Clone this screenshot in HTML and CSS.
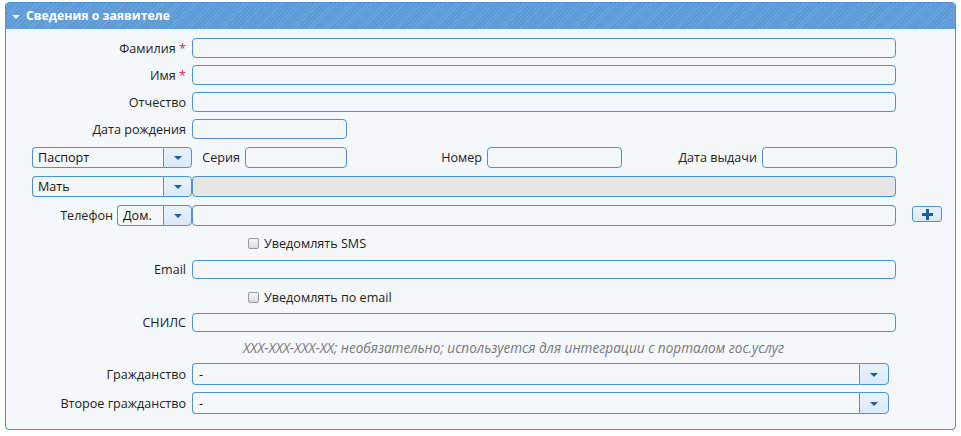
FILE: index.html
```html
<!DOCTYPE html>
<html lang="ru">
<head>
<meta charset="utf-8">
<title>Сведения о заявителе</title>
<link rel="stylesheet" href="styles.css">
</head>
<body>
<div class="panel">
  <div class="panel-head"><span class="tri"></span><span class="title">Сведения о заявителе</span></div>
  <div class="panel-body">
    <div class="row r-gap7">
      <label class="lbl">Фамилия <span class="req">*</span></label>
      <input class="inp wide" type="text">
    </div>
    <div class="row r-gap7">
      <label class="lbl">Имя <span class="req">*</span></label>
      <input class="inp wide" type="text">
    </div>
    <div class="row r-gap7">
      <label class="lbl">Отчество</label>
      <input class="inp wide" type="text">
    </div>
    <div class="row r-gap8">
      <label class="lbl">Дата рождения</label>
      <input class="inp date" type="text">
    </div>
    <div class="row r-gap8 tall indent">
      <div class="sel sel-doc"><span class="sel-text">Паспорт</span><span class="sel-btn"><span class="arr"></span></span></div>
      <label class="lbl-s w-ser">Серия</label>
      <input class="inp ser" type="text">
      <label class="lbl-s w-num">Номер</label>
      <input class="inp num" type="text">
      <label class="lbl-s w-num">Дата выдачи</label>
      <input class="inp num" type="text">
    </div>
    <div class="row r-gap8 tall indent">
      <div class="sel sel-doc"><span class="sel-text">Мать</span><span class="sel-btn"><span class="arr"></span></span></div>
      <input class="inp wide gray" type="text" disabled>
    </div>
    <div class="row r-gap7 tall">
      <label class="lbl-phone">Телефон</label>
      <div class="sel sel-phone"><span class="sel-text">Дом.</span><span class="sel-btn"><span class="arr"></span></span></div>
      <input class="inp wide" type="text">
      <button class="plus" type="button"><svg width="11" height="11" viewBox="0 0 11 11"><path d="M4 0h3v4h4v3H7v4H4V7H0V4h4z" fill="#1c5da6"/></svg></button>
    </div>
    <div class="row r-gap7 cbrow">
      <span class="cb"></span><span class="cb-text">Уведомлять SMS</span>
    </div>
    <div class="row r-gap8 short">
      <label class="lbl">Email</label>
      <input class="inp wide" type="text">
    </div>
    <div class="row r-gap6 cbrow">
      <span class="cb"></span><span class="cb-text">Уведомлять по email</span>
    </div>
    <div class="row r-gap6 short">
      <label class="lbl">СНИЛС</label>
      <input class="inp wide" type="text">
    </div>
    <div class="row r-gap7 hint">XXX-XXX-XXX-XX; необязательно; используется для интеграции с порталом гос.услуг</div>
    <div class="row r-gap7 big">
      <label class="lbl">Гражданство</label>
      <div class="sel sel-cit"><span class="sel-text">-</span><span class="sel-btn"><span class="arr"></span></span></div>
    </div>
    <div class="row big">
      <label class="lbl">Второе гражданство</label>
      <div class="sel sel-cit"><span class="sel-text">-</span><span class="sel-btn"><span class="arr"></span></span></div>
    </div>
  </div>
</div>
</body>
</html>
```
FILE: styles.css
```css
* { box-sizing: border-box; }
html, body { margin: 0; padding: 0; background: #ffffff; }
body {
  font-family: "Open Sans", "Noto Sans", Arial, sans-serif;
  font-size: 12.6px;
  color: #222;
  padding: 2px 0 0 5px;
}
.panel {
  width: 951px;
  border: 1px solid #4a93d6;
  border-radius: 4px;
  background: #f5f8fa;
  overflow: hidden;
}
.panel-head {
  height: 26px;
  display: flex;
  align-items: center;
  padding-left: 6px;
  background-color: #5c9bd7;
  background-image: repeating-linear-gradient(135deg, rgba(255,255,255,0.10) 0 1px, rgba(255,255,255,0) 1px 3px);
  color: #fff;
  font-weight: bold;
  font-size: 12.3px;
}
.tri {
  width: 0; height: 0;
  border-left: 4px solid transparent;
  border-right: 4px solid transparent;
  border-top: 4px solid #e8f1fa;
  margin-right: 6px;
  margin-top: 1px;
}
.title { line-height: 1; }
.panel-body { padding: 9px 0 15px 0; }
.row { display: flex; align-items: center; height: 20px; }
.row.tall { height: 21px; }
.row.short { height: 19px; }
.row.big { height: 22px; }
.r-gap6 { margin-bottom: 6px; }
.r-gap7 { margin-bottom: 7px; }
.r-gap8 { margin-bottom: 8px; }
.lbl {
  width: 186px;
  padding-right: 6px;
  text-align: right;
  white-space: nowrap;
  flex: none;
}
.req { color: #e0284a; }
.inp {
  height: 100%;
  border: 1px solid #4a93d6;
  border-radius: 4px;
  background: #f5f8fa;
  font: inherit;
  padding: 0 4px;
  margin: 0;
  flex: none;
  outline: none;
}
.inp.wide { width: 704px; }
.inp.date { width: 155px; }
.inp.ser { width: 102px; }
.inp.num { width: 135px; }
.inp.gray { background: #e6e6e6; }
.indent { padding-left: 26px; }
.lbl-s { text-align: right; padding-right: 5px; flex: none; white-space: nowrap; }
.w-ser { width: 53px; }
.w-num { width: 140px; }
.lbl-phone { width: 111px; padding-right: 4px; text-align: right; flex: none; }
.sel {
  display: flex;
  height: 100%;
  flex: none;
}
.sel-text {
  flex: 1;
  border: 1px solid #4a93d6;
  border-right: none;
  border-radius: 4px 0 0 4px;
  background: #f5f8fa;
  padding-left: 5px;
  display: flex;
  align-items: center;
  color: #111;
}
.sel-btn {
  width: 29px;
  border: 1px solid #4a93d6;
  border-radius: 0 4px 4px 0;
  background: linear-gradient(#e8f2fc, #dbe9f8);
  display: flex;
  align-items: center;
  justify-content: center;
}
.arr {
  width: 0; height: 0;
  border-left: 4px solid transparent;
  border-right: 4px solid transparent;
  border-top: 4px solid #1c5da6;
  margin-top: 1px;
}
.sel-doc { width: 160px; }
.sel-phone { width: 75px; }
.sel-cit { width: 697px; }
.sel-cit .sel-btn { width: 30px; }
.sel-cit .sel-text { padding-left: 6px; }
.plus {
  margin-left: 16px;
  width: 30px;
  height: 16px;
  border: 1px solid #4a93d6;
  border-radius: 3px;
  background: linear-gradient(#e8f2fc, #d9e8f8);
  display: flex;
  align-items: center;
  justify-content: center;
  padding: 0;
  align-self: flex-start;
  margin-top: 1px;
}
.cbrow { padding-left: 242px; }
.cb {
  width: 11px; height: 11px;
  border: 1px solid #9a9a9a;
  border-radius: 2px;
  background: linear-gradient(#f4f4f4, #dcdcdc);
  margin-right: 5px;
  flex: none;
}
.cb-text { color: #222; }
.hint {
  height: 18px;
  padding-left: 237px;
  font-style: italic;
  font-size: 13.6px;
  color: #777;
}
```
